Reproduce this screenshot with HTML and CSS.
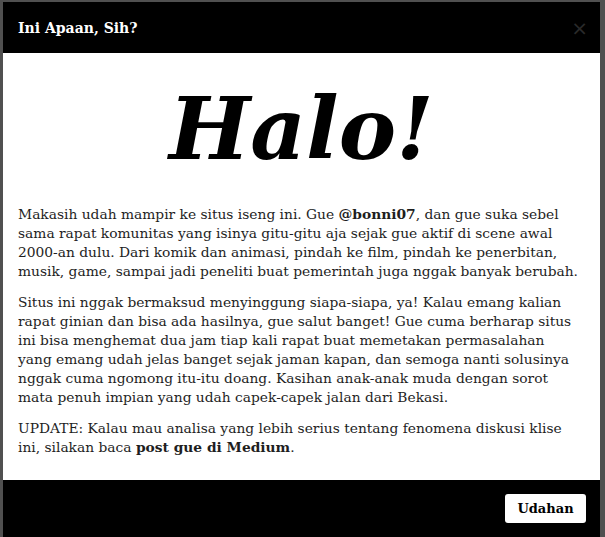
FILE: index.html
```html
<!DOCTYPE html>
<html lang="id">
<head>
<meta charset="utf-8">
<title>Ini Apaan, Sih?</title>
<link rel="stylesheet" href="styles.css">
</head>
<body>
<div class="backdrop">
  <div class="modal">
    <header class="modal-header">
      <h4 class="modal-title">Ini Apaan, Sih?</h4>
      <button class="close" type="button">×</button>
    </header>
    <main class="modal-body">
      <h1 class="hello">Halo!</h1>
      <p>Makasih udah mampir ke situs iseng ini. Gue <strong>@bonni07</strong>, dan gue suka sebel<br>sama rapat komunitas yang isinya gitu-gitu aja sejak gue aktif di scene awal<br>2000-an dulu. Dari komik dan animasi, pindah ke film, pindah ke penerbitan,<br>musik, game, sampai jadi peneliti buat pemerintah juga nggak banyak berubah.</p>
      <p>Situs ini nggak bermaksud menyinggung siapa-siapa, ya! Kalau emang kalian<br>rapat ginian dan bisa ada hasilnya, gue salut banget! Gue cuma berharap situs<br>ini bisa menghemat dua jam tiap kali rapat buat memetakan permasalahan<br>yang emang udah jelas banget sejak jaman kapan, dan semoga nanti solusinya<br>nggak cuma ngomong itu-itu doang. Kasihan anak-anak muda dengan sorot<br>mata penuh impian yang udah capek-capek jalan dari Bekasi.</p>
      <p>UPDATE: Kalau mau analisa yang lebih serius tentang fenomena diskusi klise<br>ini, silakan baca <strong>post gue di Medium</strong>.</p>
    </main>
    <footer class="modal-footer">
      <button class="btn" type="button">Udahan</button>
    </footer>
  </div>
</div>
</body>
</html>
```
FILE: styles.css
```css
html, body {
  margin: 0;
  padding: 0;
  height: 100%;
  overflow: hidden;
}
body {
  background: #505050;
  font-family: "DejaVu Serif", "Liberation Serif", serif;
}
.backdrop {
  padding: 2px 5px 0 3px;
}
.modal {
  background: #fff;
  display: flex;
  flex-direction: column;
}
.modal-header {
  background: #000;
  height: 51px;
  display: flex;
  align-items: center;
  justify-content: space-between;
  padding: 0 12px 0 15px;
}
.modal-title {
  margin: 0;
  color: #fff;
  font-size: 14px;
  font-weight: bold;
}
.close {
  background: none;
  border: 0;
  color: #2a2a2a;
  font-size: 20px;
  font-family: "DejaVu Sans", sans-serif;
  padding: 0;
}
.modal-body {
  padding: 26px 15px 11px 15px;
  color: #1e1e1e;
  font-size: 13.8px;
  line-height: 19px;
  white-space: nowrap;
}
.hello {
  margin: 0 0 26px;
  text-align: center;
  font-size: 86px;
  line-height: 100px;
  font-style: italic;
  font-weight: bold;
  color: #000;
}
.modal-body p {
  margin: 0 0 12px;
}
.modal-footer {
  background: #000;
  height: 60px;
  display: flex;
  align-items: flex-start;
  justify-content: flex-end;
  padding: 14px 14px 0;
  box-sizing: border-box;
}
.btn {
  background: #fff;
  border: 0;
  border-radius: 3px;
  font-family: "DejaVu Serif", serif;
  font-weight: bold;
  font-size: 13px;
  line-height: 17px;
  padding: 6px 12px;
  width: 81px;
  color: #000;
}
```
